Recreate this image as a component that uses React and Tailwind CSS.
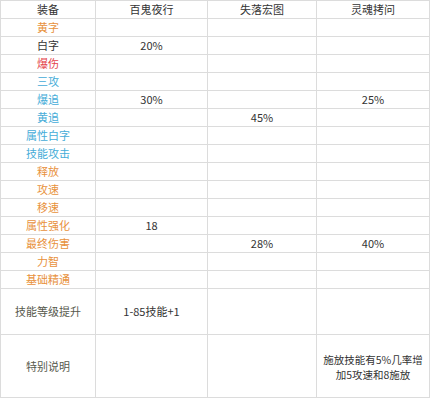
import React from "react";

const ORANGE = "text-[#e8913c]";
const CYAN = "text-[#45acd8]";
const RED = "text-[#e4444c]";
const DARK = "text-[#333333]";
const OLIVE = "text-[#56584c]";

const rows = [
  { label: "黄字", color: ORANGE, vals: ["", "", ""] },
  { label: "白字", color: DARK, vals: ["20%", "", ""] },
  { label: "爆伤", color: RED, vals: ["", "", ""] },
  { label: "三攻", color: CYAN, vals: ["", "", ""] },
  { label: "爆追", color: CYAN, vals: ["30%", "", "25%"] },
  { label: "黄追", color: CYAN, vals: ["", "45%", ""] },
  { label: "属性白字", color: CYAN, vals: ["", "", ""] },
  { label: "技能攻击", color: CYAN, vals: ["", "", ""] },
  { label: "释放", color: ORANGE, vals: ["", "", ""] },
  { label: "攻速", color: ORANGE, vals: ["", "", ""] },
  { label: "移速", color: ORANGE, vals: ["", "", ""] },
  { label: "属性强化", color: ORANGE, vals: ["18", "", ""] },
  { label: "最终伤害", color: ORANGE, vals: ["", "28%", "40%"] },
  { label: "力智", color: ORANGE, vals: ["", "", ""] },
  { label: "基础精通", color: ORANGE, vals: ["", "", ""] },
];

function Cell({ children, className = "" }) {
  return (
    <div
      className={
        "flex items-center justify-center text-center border-r border-b border-[#dcdcdc] " +
        className
      }
    >
      {children}
    </div>
  );
}

export default function App() {
  return (
    <div className="w-[430px] h-[400px] bg-white overflow-hidden">
      <div
        className="grid grid-cols-[95px_112px_109px_113px] grid-rows-[18px_repeat(15,18px)_46px_63px] border-t border-l border-[#dcdcdc] text-[11px] leading-none"
        style={{ fontFamily: '"Noto Sans CJK SC", "Noto Sans", sans-serif' }}
      >
        <Cell className={DARK}>装备</Cell>
        <Cell className={DARK}>百鬼夜行</Cell>
        <Cell className={DARK}>失落宏图</Cell>
        <Cell className={DARK}>灵魂拷问</Cell>
        {rows.map((r) => (
          <React.Fragment key={r.label}>
            <Cell className={r.color}>{r.label}</Cell>
            {r.vals.map((v, i) => (
              <Cell key={i} className={DARK}>
                {v}
              </Cell>
            ))}
          </React.Fragment>
        ))}
        <Cell className={OLIVE}>技能等级提升</Cell>
        <Cell className={DARK}>1-85技能+1</Cell>
        <Cell />
        <Cell />
        <Cell className={OLIVE}>特别说明</Cell>
        <Cell />
        <Cell />
        <Cell className={DARK + " text-[10.5px] leading-[15px] pt-[1px]"}>
          <span className="whitespace-nowrap">
            施放技能有5%几率增
            <br />
            加5攻速和8施放
          </span>
        </Cell>
      </div>
    </div>
  );
}
